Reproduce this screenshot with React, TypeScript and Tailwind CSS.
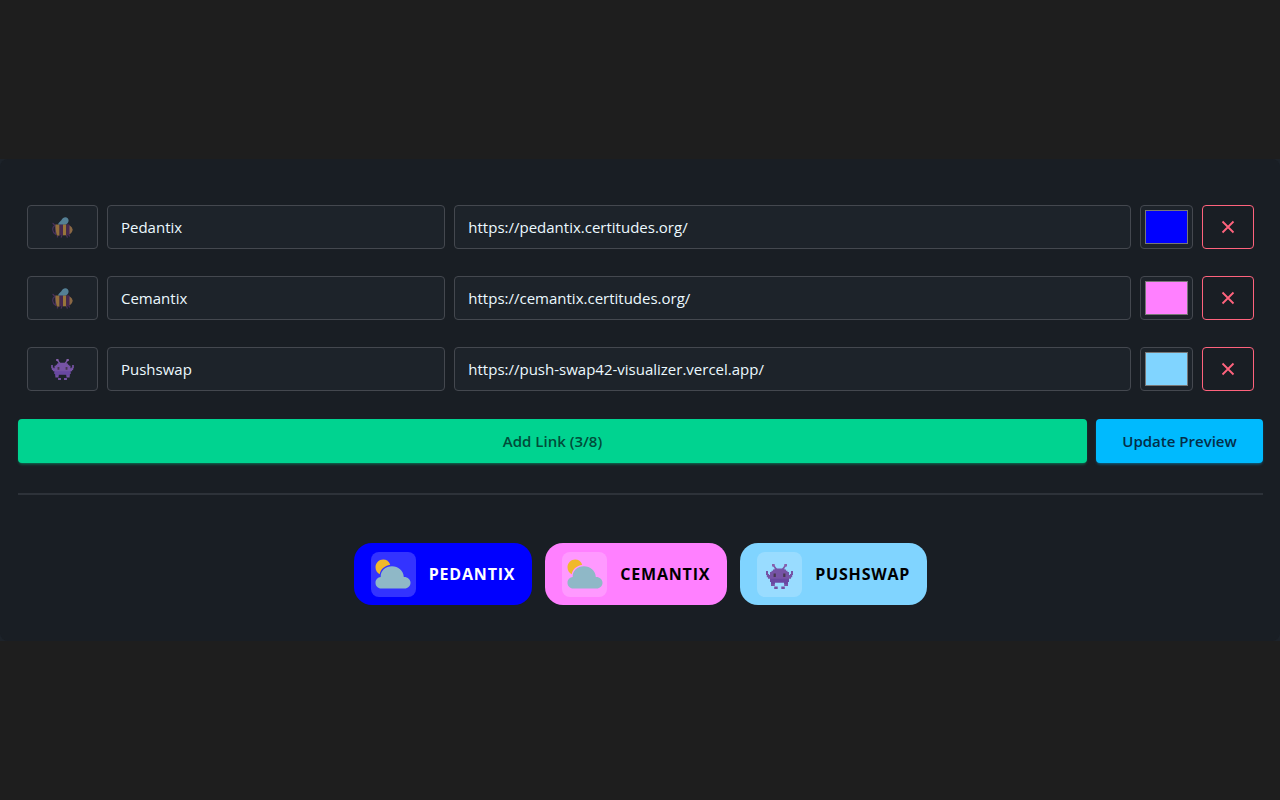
import { useState } from "react";

type IconName = "bee" | "invader" | "cloud";

interface LinkItem {
  icon: IconName;
  previewIcon: IconName;
  name: string;
  url: string;
  color: string;
  light: boolean;
}

const initialLinks: LinkItem[] = [
  { icon: "bee", previewIcon: "cloud", name: "Pedantix", url: "https://pedantix.certitudes.org/", color: "#0000ff", light: false },
  { icon: "bee", previewIcon: "cloud", name: "Cemantix", url: "https://cemantix.certitudes.org/", color: "#ff80ff", light: true },
  { icon: "invader", previewIcon: "invader", name: "Pushswap", url: "https://push-swap42-visualizer.vercel.app/", color: "#80d4ff", light: true },
];

function Bee() {
  return (
    <svg viewBox="0 0 21 21" className="size-[21px]" aria-hidden="true">
      <path
        d="M6.500 17.500 5.300 20M10 18l-.8 2.200M14.500 18l.8 2.200M16.500 17.500l1 1.500M2.500 8 1 6.300"
        stroke="#49305a"
        strokeWidth="1.200"
        strokeLinecap="round"
        fill="none"
      />
      <path d="M3.500 8.200C1.200 9.200.5 11 .8 13c.2 2 1.200 3.500 2.700 4.300z" fill="none" stroke="#47305a" strokeWidth="1.200" />
      <path d="M3.500 7.600h4.200v10.800H4.800C3.800 15 3.400 11 3.500 7.600z" fill="#916f3d" />
      <path d="M7.500 7.300h4v11h-4z" fill="#45284f" />
      <path d="M11 7.300h3.300v11H11z" fill="#98753a" />
      <path d="M14.200 7.300h2.500c.9.500 1.300 1 1.600 1.800v6.800c-.3 1-1 1.900-1.900 2.400h-2.200z" fill="#45284f" />
      <path d="M17.500 8.500c1.700 1 2.800 2.500 3.200 4.200-.4 2-1.500 3.500-3.200 4.600z" fill="#8a6844" />
      <path d="M6 7.500c.5-1.500 2-2.700 3.300-4.200C10.300 1.200 11.800.2 13.300.2c2 0 3.300 1.500 3.300 3.300 0 2.400-1.500 3.900-4 4-2.100.1-4.400-.2-6.600 0z" fill="#547f95" />
    </svg>
  );
}

function Invader({ className }: { className: string }) {
  return (
    <svg viewBox="0 0 27 25" className={className} aria-hidden="true">
      <path d="M7.500 1.500 10.500 5.500M19.500 1.500l-3 4" stroke="#7c58a8" strokeWidth="1.600" />
      <path d="M6 0h2.700v2.400H6zM18.300 0H21v2.400h-2.700z" fill="#8760ad" />
      <path
        d="M8.500 4.500h10v1H20v1.300h1.500V8H23v3h1v-1h1V7h2v4h-.8v2.200H25v1.500h-2V18h-1v4h-3.800v-3.600H8.800V22H5v-4H4v-3.300H2v-1.500H.8V11H0V7h2v3h1v1h1V8h1.500V6.800H7V5.500h1.500z"
        fill="#7653a5"
      />
      <path d="M4 14.700h19V18h-1v2h-3.800v-1.600H8.800V20H5v-2H4z" fill="#6948a2" />
      <path d="M8.200 22.500h3.500V25H8.200zM15.300 22.500h3.500V25h-3.500z" fill="#7350a3" />
      <path d="M7.600 9.500h2.200v3.400H7.600zM17.200 9.500h2.200v3.400h-2.200z" fill="#46384f" />
    </svg>
  );
}

function Cloud() {
  return (
    <svg viewBox="0 0 36 30" className="h-[30px] w-9" aria-hidden="true">
      <path d="M15.200 5.800C14.200 2.400 11.400.5 8.200.5 4 .5.5 4 .5 8.200c0 3.200 1.700 5.800 4.200 7C5.600 10.500 9.500 6.700 15.200 5.800z" fill="#f0b929" />
      <path
        d="M6.300 29.500C2.800 29.500.5 26.800.5 23.700c0-3 2.200-5.400 5.200-5.700C5.300 12 10.400 7.300 17 7.300c6.200 0 11.400 4.400 11.800 10.600 3.700-.2 6.700 2.400 6.700 5.800 0 3.200-2.500 5.800-5.900 5.800z"
        fill="#8fb8c7"
      />
    </svg>
  );
}

function LinkIcon({ name, large }: { name: IconName; large?: boolean }) {
  if (name === "bee") return <Bee />;
  if (name === "cloud") return <Cloud />;
  return <Invader className={large ? "mt-1 h-[25px] w-[27px]" : "h-[21px] w-[23px]"} />;
}

export default function App() {
  const [links, setLinks] = useState(initialLinks);
  const [preview, setPreview] = useState(initialLinks);

  const update = (index: number, change: Partial<LinkItem>) =>
    setLinks(links.map((link, i) => (i === index ? { ...link, ...change } : link)));

  const field = "h-11 w-full min-w-0 rounded-[4px] border border-[#44484f] bg-[#1d232a]";

  return (
    <div className="flex min-h-screen items-center bg-[#1e1e1e] font-['Open_Sans','Noto_Sans',sans-serif] text-[15px] leading-5 text-[#ecf9ff]">
      <div className="w-full bg-[#1d232a]">
        <main className="rounded-lg bg-[#191e24] pt-[46px] pr-[17px] pb-9 pl-[18px]">
          <div className="flex flex-col gap-[27px] px-[9px]">
            {links.map((link, index) => (
              <div key={index} className="grid grid-cols-[71px_1fr_2fr_53px_52px] gap-[9px]">
                <button type="button" aria-label={`Icon of ${link.name}`} className={`${field} flex items-center justify-center`}>
                  <LinkIcon name={link.icon} />
                </button>
                <input
                  aria-label="Name"
                  value={link.name}
                  onChange={(event) => update(index, { name: event.target.value })}
                  className={`${field} px-[13px]`}
                />
                <input
                  aria-label="URL"
                  value={link.url}
                  onChange={(event) => update(index, { url: event.target.value })}
                  className={`${field} px-[13px]`}
                />
                <input
                  type="color"
                  aria-label="Color"
                  value={link.color}
                  onChange={(event) => update(index, { color: event.target.value })}
                  className={`${field} p-1 [&::-webkit-color-swatch]:border-[#777777] [&::-webkit-color-swatch-wrapper]:p-0`}
                />
                <button
                  type="button"
                  aria-label={`Remove ${link.name}`}
                  onClick={() => setLinks(links.filter((_, i) => i !== index))}
                  className="flex h-11 items-center justify-center rounded-[4px] border border-[#ff637d]"
                >
                  <svg viewBox="0 0 14 14" className="size-3.5" fill="none" stroke="#ff637d" strokeWidth="1.800" aria-hidden="true">
                    <path d="m1.500 1.500 11 11m0-11-11 11" />
                  </svg>
                </button>
              </div>
            ))}
          </div>

          <div className="mt-7 flex gap-[9px] font-semibold">
            <button
              type="button"
              onClick={() => setLinks([...links, { ...initialLinks[0], name: "", url: "" }])}
              disabled={links.length >= 8}
              className="h-11 flex-1 rounded-[4px] bg-[#00d390] text-[#004c39] shadow-[0_2px_3px_-1px_#00d39080]"
            >
              Add Link ({links.length}/8)
            </button>
            <button
              type="button"
              onClick={() => setPreview(links)}
              className="h-11 w-[167px] rounded-[4px] bg-[#00bafe] text-[#042e49] shadow-[0_2px_3px_-1px_#00bafe80]"
            >
              Update Preview
            </button>
          </div>

          <hr className="mt-[30px] border-t-2 border-[#2d3239]" />

          <div className="mt-12 flex flex-wrap justify-center gap-[13px]">
            {preview.map((link, index) => (
              <a
                key={index}
                href={link.url}
                className={`flex h-[62px] items-center gap-[13px] rounded-[18px] px-[17px] text-base font-bold tracking-wider uppercase ${link.light ? "text-black" : "text-white"}`}
                style={{ backgroundColor: link.color }}
              >
                <span className="flex size-[45px] items-center justify-center rounded-lg bg-white/20">
                  <LinkIcon name={link.previewIcon} large />
                </span>
                {link.name}
              </a>
            ))}
          </div>
        </main>
      </div>
    </div>
  );
}
